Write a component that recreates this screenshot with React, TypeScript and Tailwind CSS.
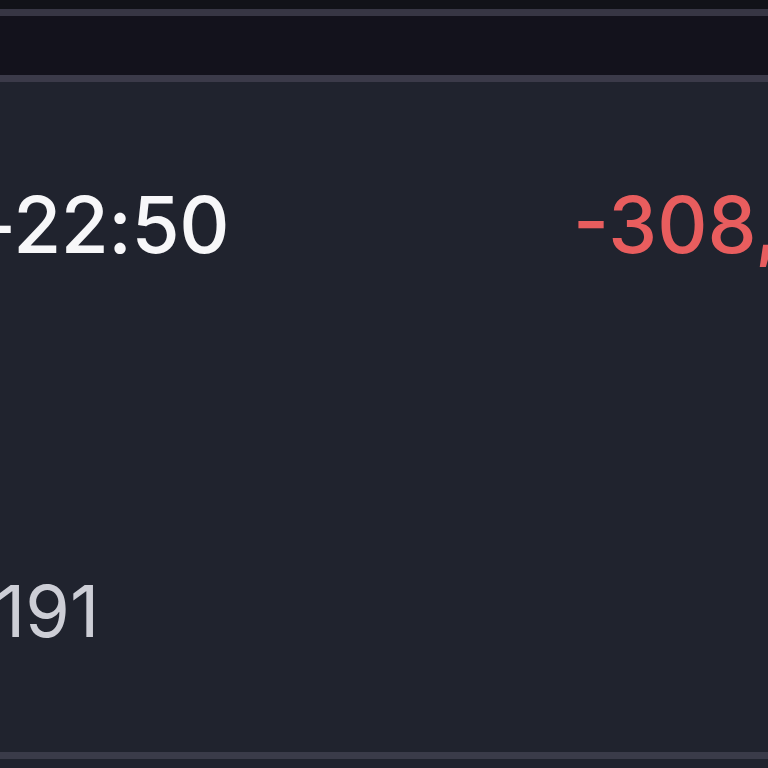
export default function App() {
  return (
    <div
      className="w-[768px] h-[768px] overflow-hidden bg-[#20232e] flex flex-col"
      style={{ fontFamily: "Inter, 'Open Sans', sans-serif" }}
    >
      <div className="h-[9px] shrink-0 bg-[#111218]" />
      <div className="h-[7px] shrink-0 bg-[#373644]" />
      <div className="h-[59px] shrink-0 bg-[#13121c]" />
      <div className="h-[7px] shrink-0 bg-[#3b3a49]" />
      <div className="flex-1 flex flex-col min-h-0">
        <div className="flex items-start pt-[104px] whitespace-nowrap">
          <div className="w-[578px] shrink-0 ml-[-20px] text-[78px] leading-none font-medium text-[#f7f7f9] tracking-[-0.5px]">
            -22:50
          </div>
          <div className="text-[78px] leading-none font-medium text-[#e85d5e] ml-[15px]">
            -308,250
          </div>
        </div>
        <div className="pt-[311px] ml-[-4px] text-[72px] leading-none font-normal text-[#cdced6] whitespace-nowrap">
          191
        </div>
      </div>
      <div className="h-[7px] shrink-0 bg-[#3a3b49]" />
      <div className="h-[9px] shrink-0" />
    </div>
  );
}
